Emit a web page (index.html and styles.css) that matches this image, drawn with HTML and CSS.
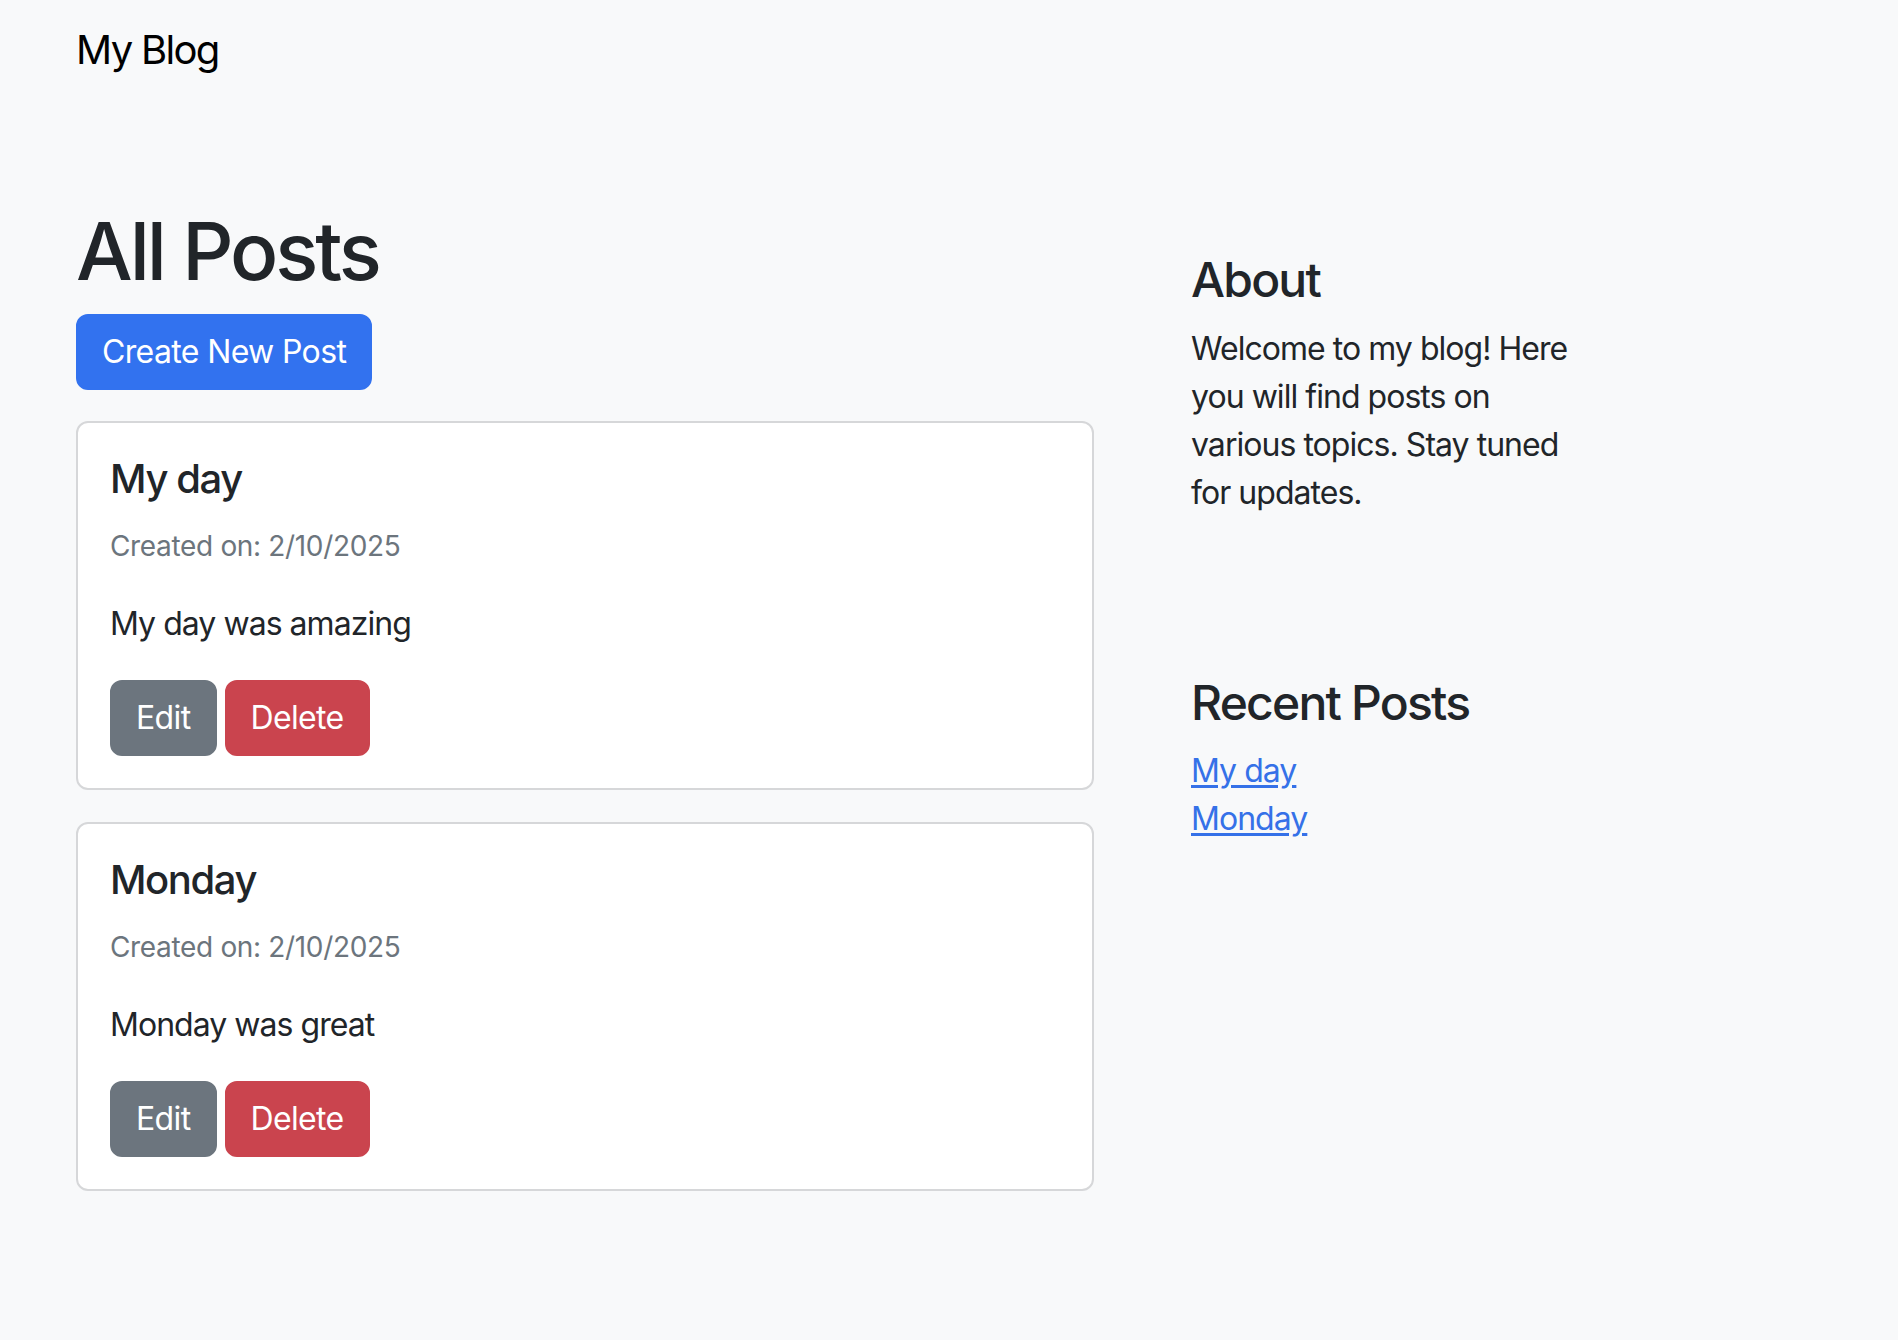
FILE: index.html
```html
<!DOCTYPE html>
<html lang="en">
<head>
<meta charset="utf-8">
<title>My Blog</title>
<link rel="stylesheet" href="styles.css">
</head>
<body>
<nav class="navbar">
  <a class="brand" href="#">My Blog</a>
</nav>
<main class="page">
  <div class="row">
    <section class="col-main">
      <h1 class="page-title">All Posts</h1>
      <a class="btn btn-primary btn-create" href="#">Create New Post</a>
      <article class="card">
        <h5 class="card-title">My day</h5>
        <p class="card-text"><small class="muted">Created on: 2/10/2025</small></p>
        <p class="card-text">My day was amazing</p>
        <div class="actions">
          <a class="btn btn-secondary" href="#">Edit</a>
          <button class="btn btn-danger" type="button">Delete</button>
        </div>
      </article>
      <article class="card">
        <h5 class="card-title">Monday</h5>
        <p class="card-text"><small class="muted">Created on: 2/10/2025</small></p>
        <p class="card-text">Monday was great</p>
        <div class="actions">
          <a class="btn btn-secondary" href="#">Edit</a>
          <button class="btn btn-danger" type="button">Delete</button>
        </div>
      </article>
    </section>
    <aside class="col-side">
      <div class="side-box">
        <h4 class="side-title">About</h4>
        <p class="side-text">Welcome to my blog! Here you will find posts on various topics. Stay tuned for updates.</p>
      </div>
      <div class="side-box">
        <h4 class="side-title">Recent Posts</h4>
        <ul class="recent">
          <li><a href="#">My day</a></li>
          <li><a href="#">Monday</a></li>
        </ul>
      </div>
    </aside>
  </div>
</main>
</body>
</html>
```

FILE: styles.css
```css
* { box-sizing: border-box; }

html, body {
  margin: 0;
  padding: 0;
}

body {
  background: #f8f9fa;
  color: #212529;
  font-family: Inter, "Noto Sans", "Liberation Sans", sans-serif;
  font-size: 32px;
  line-height: 48px;
  letter-spacing: -0.03em;
  width: 1898px;
  min-height: 1340px;
}

.navbar {
  padding: 20px 76px 20px;
  height: 100px;
}

.brand {
  display: inline-block;
  font-size: 40px;
  line-height: 60px;
  letter-spacing: -0.042em;
  color: #000;
  text-decoration: none;
}

.page {
  padding: 103px 0 0 76px;
}

.row {
  display: flex;
  align-items: flex-start;
  gap: 49px;
}

.col-main {
  width: 1018px;
  flex: none;
}

.col-side {
  width: 485px;
  flex: none;
}

.page-title {
  margin: 0 0 15px;
  font-size: 80px;
  line-height: 96px;
  font-weight: 500;
  letter-spacing: -0.038em;
}

.btn {
  display: inline-block;
  font-family: inherit;
  font-size: 32px;
  line-height: 48px;
  letter-spacing: -0.02em;
  padding: 12px 24px;
  border: 2px solid transparent;
  border-radius: 12px;
  color: #fff;
  text-decoration: none;
  cursor: pointer;
}

.btn-primary { background: #3272ef; border-color: #3272ef; }
.btn-secondary { background: #6c757e; border-color: #6c757e; }
.btn-danger { background: #ca444e; border-color: #ca444e; }

.btn-create {
  margin-bottom: 31px;
}

.card {
  background: #fff;
  border: 2px solid #d6d7d9;
  border-radius: 12px;
  padding: 32px;
  margin-bottom: 32px;
}

.card-title {
  margin: 0 0 16px;
  font-size: 40px;
  line-height: 48px;
  font-weight: 500;
  letter-spacing: -0.035em;
}

.card-text {
  margin: 0 0 32px;
}

.muted {
  font-size: 28px;
  letter-spacing: -0.012em;
  color: #6c757d;
  position: relative;
  top: 2px;
}

.actions {
  display: flex;
  gap: 8px;
}

.side-box {
  padding: 48px;
  margin-bottom: 29px;
}

.side-title {
  margin: 0 0 16px;
  font-size: 48px;
  line-height: 57.6px;
  font-weight: 500;
  letter-spacing: -0.037em;
}

.side-text {
  margin: 0 0 32px;
}

.recent {
  list-style: none;
  margin: 0 0 32px;
  padding: 0;
}

.recent a {
  color: #3571e8;
  text-decoration: underline;
  text-underline-offset: 3px;
}
```
